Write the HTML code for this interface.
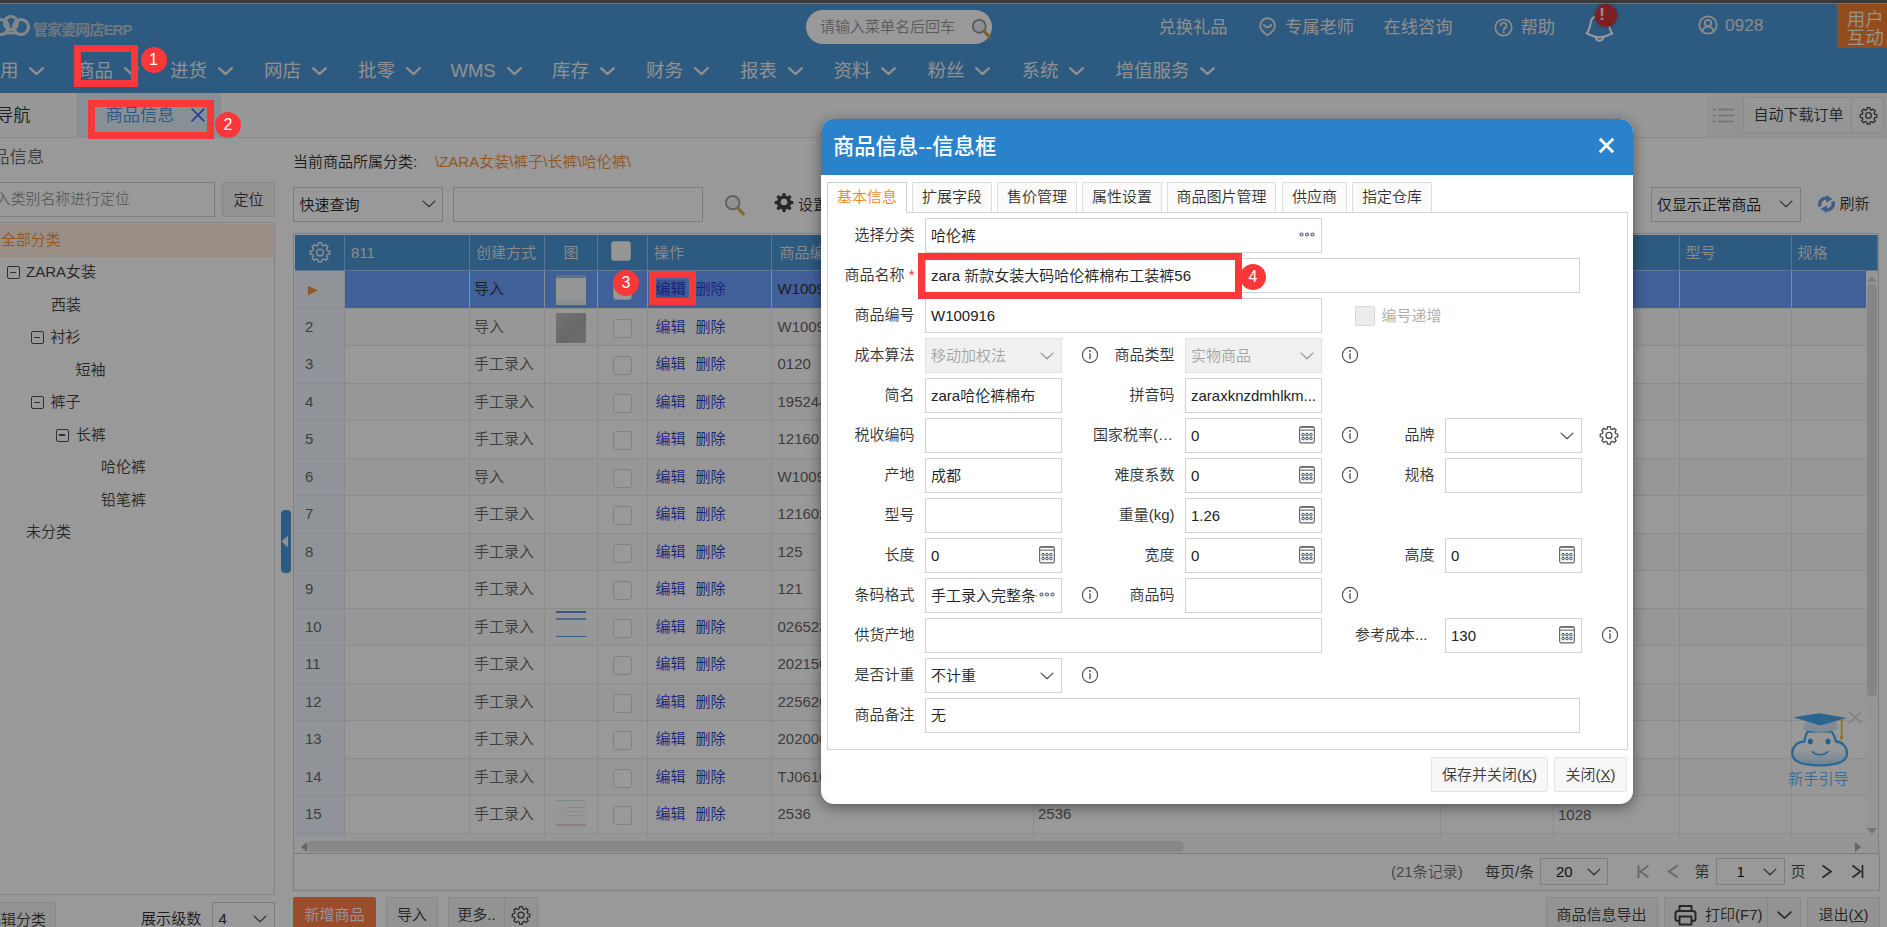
<!DOCTYPE html><html lang="zh-CN"><head><meta charset="utf-8"><title>商品信息</title><style>*{box-sizing:border-box;margin:0;padding:0}
html,body{width:1887px;height:927px;overflow:hidden;background:#fff}
body{font-family:"Liberation Sans","Noto Sans CJK SC",sans-serif;font-size:15px;color:#333;position:relative;font-weight:350}
.a{position:absolute;white-space:nowrap}
#base{position:absolute;left:0;top:0;width:1887px;height:927px;overflow:hidden;background:#fff}
#dim{position:absolute;left:0;top:0;width:1887px;height:927px;background:rgba(0,0,0,.4)}
#topbar{left:0;top:0;width:1887px;height:3px;background:#616161}
#hdr{left:0;top:3px;width:1887px;height:90px;background:#4c96d6}
.hw{color:#e3e3e3}
.menu{top:56px;height:30px;line-height:30px;font-size:18.500px;color:#f0f0f0;font-weight:400}
.chev{position:absolute}
#tabbar{left:0;top:93px;width:1887px;height:45px;background:#fdfdfd;border-bottom:1px solid #e9e9e9}
.inp{position:absolute;border:1px solid #d0d0d0;background:#fff;height:35px}
.btn{position:absolute;border:1px solid #e3e3e3;background:#f6f6f6;height:35px;line-height:33px;text-align:center;border-radius:2px;color:#3c3c3c;font-size:15px;white-space:nowrap}
.tree{font-size:15px;color:#444;line-height:20px}
.tbox{position:absolute;width:13px;height:13px;border:1.200px solid #505050;border-radius:2px;margin-left:-1px}
.tbox:after{content:"";position:absolute;left:2.300px;top:4.600px;width:6px;height:1.400px;background:#505050}
/* grid */
#grid{left:293px;top:233px;width:1586px;height:621px;border:1px solid #d4d4d4;border-bottom:none;background:#fff;overflow:hidden}
.gh{position:absolute;top:1px;height:36px;border-bottom:1px solid #a8c8e8;background:#4c96d6;color:#e8e8e8;font-size:15px;line-height:36px;padding-left:6px;border-right:1px solid #9cc4ea}
.gr{position:absolute;left:1px;width:1571px;height:37.53px;border-bottom:1px solid #e9e9e9}
.gc{position:absolute;top:0;height:100%;border-right:1px solid #ebebeb;line-height:36px;font-size:15px;color:#686868;padding-left:4px;overflow:hidden;white-space:nowrap}
.gn{background:#f0f7fd;border-right:1px solid #e3e6e9;padding-left:10px}
.lk{color:#2b3bd0}
.cb{position:absolute;width:19px;height:19px;border:1px solid #d9d9d9;border-radius:3px;background:#fff}
/* dialog */
#dlg{left:821px;top:119px;width:812px;height:685px;background:#fff;border-radius:13px;overflow:hidden;box-shadow:0 3px 14px rgba(0,0,0,.45)}
#dlgt{left:0;top:0;width:812px;height:56px;background:#2a82cb;color:#fff;font-size:20px;line-height:55px;padding-left:12px}
.dtab{position:absolute;top:63px;height:30px;border:1px solid #ddd;border-bottom:none;background:#fbfbfb;font-size:15px;line-height:28px;text-align:center;color:#333}
.dtab.on{color:#f08519;background:#fff;border-color:#ccc;height:31px}
#dpan{left:6px;top:93px;width:801px;height:538px;border:1px solid #d4d4d4}
.fl{position:absolute;font-size:15px;color:#333;height:34px;line-height:34px;text-align:right;white-space:nowrap}
.fi{position:absolute;height:35px;border:1px solid #d2d2d2;background:#fff;font-size:15px;line-height:33px;padding-left:5px;color:#222;white-space:nowrap;overflow:hidden}
.fi.dis{background:#f0f0f0;color:#a5a5a5;border-color:#e2e2e2}
.ic{position:absolute}
.rb{position:absolute;border:7px solid #fa3839}
.rc{position:absolute;width:26px;height:26px;border-radius:13px;background:#fa3839;color:#fff;font-size:16px;line-height:26px;text-align:center}
</style></head><body>
<div id="base">
<div class="a" id="hdr"></div><div class="a" id="topbar"></div><div class="a" style="left:0;top:3px;width:1887px;height:1px;background:#b4bcc4"></div>
<svg class="ic" style="left:-8px;top:13px" width="40" height="26" viewBox="0 0 40 26"><g fill="none" stroke="#d9e2ea" stroke-width="3.2"><circle cx="9" cy="14" r="7.5"/><circle cx="19" cy="10" r="6.5"/><circle cx="29" cy="14" r="7.5"/></g><path d="M12 20 L26 20" stroke="#d9e2ea" stroke-width="3"/></svg>
<div class="a" style="left:33px;top:19.500px;font-size:15px;line-height:20px;font-weight:700;color:#b9c7d4;letter-spacing:-.9px">管家婆网店ERP</div>
<div class="a" style="left:806px;top:10px;width:186px;height:34px;border-radius:17px;background:#fff"></div>
<div class="a" style="left:820px;top:16px;font-size:15px;line-height:22px;color:#999">请输入菜单名后回车</div>
<svg class="ic" style="left:969.500px;top:16.500px" width="23" height="23" viewBox="0 0 26 26"><circle cx="10.5" cy="10.5" r="7.3" fill="#e9eef2" stroke="#8e9499" stroke-width="2"/><path d="M16 16 L22 22.5" stroke="#c8a45a" stroke-width="3.6" stroke-linecap="round"/><path d="M6.5 9 A4.5 4.5 0 0 1 11 5.6" stroke="#fff" stroke-width="1.6" fill="none"/></svg>
<div class="a" style="left:1158.5px;font-size:17.3px;line-height:24px;top:15px;color:#ececec;font-weight:400">兑换礼品</div>
<svg class="ic" style="left:1258px;top:17px" width="19" height="20" viewBox="0 0 19 20"><path d="M9.5 1.3 a7.4 7.4 0 0 1 7.4 7.4 c0 4.2-4 7.4-7.4 9.6 c-3.4-2.2-7.4-5.4-7.4-9.6 a7.4 7.4 0 0 1 7.4-7.4z" fill="none" stroke="#e6e6e6" stroke-width="1.9"/><path d="M5.8 7.8 c1 3 6.4 3 7.4 0" fill="none" stroke="#e6e6e6" stroke-width="1.9" stroke-linecap="round"/></svg>
<div class="a" style="left:1285px;font-size:17.3px;line-height:24px;top:15px;color:#ececec;font-weight:400">专属老师</div>
<div class="a" style="left:1383.5px;font-size:17.3px;line-height:24px;top:15px;color:#ececec;font-weight:400">在线咨询</div>
<svg class="ic" style="left:1494px;top:17.5px" width="19" height="19" viewBox="0 0 19 19"><circle cx="9.5" cy="9.5" r="8.2" fill="none" stroke="#e6e6e6" stroke-width="1.8"/><path d="M6.8 7.6 a2.8 2.8 0 1 1 4.2 2.3 c-1 .6-1.4 1-1.4 2.2" fill="none" stroke="#e6e6e6" stroke-width="1.8" stroke-linecap="round"/><circle cx="9.6" cy="14.4" r="1.1" fill="#e6e6e6"/></svg>
<div class="a" style="left:1520.5px;font-size:17.3px;line-height:24px;top:15px;color:#ececec;font-weight:400">帮助</div>
<svg class="ic" style="left:1585px;top:15px" width="29" height="28" viewBox="0 0 29 28"><path d="M1.700 18.400 C4.500 15 5.300 10 6 6.500 C6.700 3 9.500 1 14.500 1 C19.500 1 22.300 3 23 6.500 C23.700 10 24.500 15 27.300 18.400 C22 21 17 22.200 14.500 22.200 C12 22.200 7 21 1.700 18.400 Z" fill="none" stroke="#ffffff" stroke-width="2.100" stroke-linejoin="round"/><path d="M10.300 21.600 C11 24.500 12.500 25.800 14.500 25.800 C16.500 25.800 18 24.500 18.700 21.600" fill="none" stroke="#ffffff" stroke-width="2.100"/></svg>
<div class="a" style="left:1594.500px;top:4px;width:22.500px;height:23px;border-radius:12px;background:#d2363a;box-shadow:0 0 3px rgba(120,40,60,.5)"></div>
<div class="a" style="left:1598px;top:3.500px;width:8px;font-size:16.500px;line-height:21px;text-align:center;font-weight:700;color:#f4f4f4">!</div>
<svg class="ic" style="left:1698px;top:15px" width="20" height="20" viewBox="0 0 20 20"><circle cx="10" cy="10" r="8.700" fill="none" stroke="#e6e6e6" stroke-width="1.800"/><circle cx="10" cy="8" r="3.200" fill="none" stroke="#e6e6e6" stroke-width="1.800"/><path d="M4.300 16.300 c1-3.300 3.200-4.600 5.700-4.600 s4.700 1.300 5.700 4.600" fill="none" stroke="#e6e6e6" stroke-width="1.800"/></svg>
<div class="a" style="left:1725px;top:13px;font-size:17.3px;line-height:24px;color:#e6e6e6">0928</div>
<div class="a" style="left:1837px;top:4px;width:50px;height:43.500px;background:#f6802f"></div>
<div class="a" style="left:1846.700px;top:11.300px;font-size:18.500px;line-height:17.600px;color:#fff5ea;white-space:normal;width:40px">用户互动</div>
<div class="a menu" style="left:-18.5px">常用</div>
<svg class="chev" style="left:29.0px;top:66.5px" width="15" height="8.5" viewBox="0 0 16 9"><path d="M1.2 1.2 L8 7.6 L14.8 1.2" fill="none" stroke="#eeeeee" stroke-width="2.4" stroke-linecap="round" stroke-linejoin="round"/></svg>
<div class="a menu" style="left:76px">商品</div>
<svg class="chev" style="left:123.5px;top:66.5px" width="15" height="8.5" viewBox="0 0 16 9"><path d="M1.2 1.2 L8 7.6 L14.8 1.2" fill="none" stroke="#eeeeee" stroke-width="2.4" stroke-linecap="round" stroke-linejoin="round"/></svg>
<div class="a menu" style="left:170px">进货</div>
<svg class="chev" style="left:217.5px;top:66.5px" width="15" height="8.5" viewBox="0 0 16 9"><path d="M1.2 1.2 L8 7.6 L14.8 1.2" fill="none" stroke="#eeeeee" stroke-width="2.4" stroke-linecap="round" stroke-linejoin="round"/></svg>
<div class="a menu" style="left:264px">网店</div>
<svg class="chev" style="left:311.5px;top:66.5px" width="15" height="8.5" viewBox="0 0 16 9"><path d="M1.2 1.2 L8 7.6 L14.8 1.2" fill="none" stroke="#eeeeee" stroke-width="2.4" stroke-linecap="round" stroke-linejoin="round"/></svg>
<div class="a menu" style="left:358px">批零</div>
<svg class="chev" style="left:405.5px;top:66.5px" width="15" height="8.5" viewBox="0 0 16 9"><path d="M1.2 1.2 L8 7.6 L14.8 1.2" fill="none" stroke="#eeeeee" stroke-width="2.4" stroke-linecap="round" stroke-linejoin="round"/></svg>
<div class="a menu" style="left:450.5px">WMS</div>
<svg class="chev" style="left:507.0px;top:66.5px" width="15" height="8.5" viewBox="0 0 16 9"><path d="M1.2 1.2 L8 7.6 L14.8 1.2" fill="none" stroke="#eeeeee" stroke-width="2.4" stroke-linecap="round" stroke-linejoin="round"/></svg>
<div class="a menu" style="left:552px">库存</div>
<svg class="chev" style="left:599.5px;top:66.5px" width="15" height="8.5" viewBox="0 0 16 9"><path d="M1.2 1.2 L8 7.6 L14.8 1.2" fill="none" stroke="#eeeeee" stroke-width="2.4" stroke-linecap="round" stroke-linejoin="round"/></svg>
<div class="a menu" style="left:646px">财务</div>
<svg class="chev" style="left:693.5px;top:66.5px" width="15" height="8.5" viewBox="0 0 16 9"><path d="M1.2 1.2 L8 7.6 L14.8 1.2" fill="none" stroke="#eeeeee" stroke-width="2.4" stroke-linecap="round" stroke-linejoin="round"/></svg>
<div class="a menu" style="left:740px">报表</div>
<svg class="chev" style="left:787.5px;top:66.5px" width="15" height="8.5" viewBox="0 0 16 9"><path d="M1.2 1.2 L8 7.6 L14.8 1.2" fill="none" stroke="#eeeeee" stroke-width="2.4" stroke-linecap="round" stroke-linejoin="round"/></svg>
<div class="a menu" style="left:833.5px">资料</div>
<svg class="chev" style="left:881.0px;top:66.5px" width="15" height="8.5" viewBox="0 0 16 9"><path d="M1.2 1.2 L8 7.6 L14.8 1.2" fill="none" stroke="#eeeeee" stroke-width="2.4" stroke-linecap="round" stroke-linejoin="round"/></svg>
<div class="a menu" style="left:927.5px">粉丝</div>
<svg class="chev" style="left:975.0px;top:66.5px" width="15" height="8.5" viewBox="0 0 16 9"><path d="M1.2 1.2 L8 7.6 L14.8 1.2" fill="none" stroke="#eeeeee" stroke-width="2.4" stroke-linecap="round" stroke-linejoin="round"/></svg>
<div class="a menu" style="left:1021.5px">系统</div>
<svg class="chev" style="left:1069.0px;top:66.5px" width="15" height="8.5" viewBox="0 0 16 9"><path d="M1.2 1.2 L8 7.6 L14.8 1.2" fill="none" stroke="#eeeeee" stroke-width="2.4" stroke-linecap="round" stroke-linejoin="round"/></svg>
<div class="a menu" style="left:1115.5px">增值服务</div>
<svg class="chev" style="left:1200.0px;top:66.5px" width="15" height="8.5" viewBox="0 0 16 9"><path d="M1.2 1.2 L8 7.6 L14.8 1.2" fill="none" stroke="#eeeeee" stroke-width="2.4" stroke-linecap="round" stroke-linejoin="round"/></svg>
<div class="a" id="tabbar"></div>
<div class="a" style="left:77px;top:93px;width:144px;height:44px;background:#e2f0fc;border-left:1px solid #dfe6ec;border-right:1px solid #dfe6ec"></div>
<div class="a" style="left:-4px;top:103px;font-size:17.3px;line-height:24px;color:#333">导航</div>
<div class="a" style="left:105.500px;top:103px;font-size:17.3px;line-height:24px;color:#4c8fd6">商品信息</div>
<svg class="ic" style="left:191px;top:108px" width="14" height="14" viewBox="0 0 14 14"><path d="M1.200 1.200 L12.800 12.800 M12.800 1.200 L1.200 12.800" stroke="#4f6df0" stroke-width="1.900" stroke-linecap="round"/></svg>
<div class="a" style="left:1706px;top:93px;width:181px;height:44px;background:#f6f6f6"></div>
<svg class="ic" style="left:1713px;top:108px" width="21" height="15" viewBox="0 0 21 15"><g stroke="#bdbdbd" stroke-width="1.500"><path d="M0 1.500h2.500M5 1.500h16M0 7.500h2.500M5 7.500h16M0 13.500h2.500M5 13.500h16"/></g></svg>
<div class="btn" style="left:1743px;top:97px;width:109px;height:36px;line-height:34px;border-radius:3px 0 0 3px;background:#fafafa;padding-left:2px">自动下载订单</div>
<div class="btn" style="left:1851px;top:97px;width:33px;height:36px;border-radius:0 3px 3px 0;background:#fafafa"></div>
<svg class="ic" style="left:1858.5px;top:106px" width="19" height="19" viewBox="0 0 24 24"><path fill="none" stroke="#444" stroke-width="1.6" stroke-linejoin="round" d="M10.3 2.5h3.4l.5 2.6 1.7.8 2.3-1.5 2.4 2.4-1.5 2.3.8 1.7 2.6.5v3.4l-2.6.5-.8 1.7 1.5 2.3-2.4 2.4-2.3-1.5-1.7.8-.5 2.6h-3.4l-.5-2.6-1.7-.8-2.3 1.5-2.4-2.4 1.5-2.3-.8-1.7-2.6-.5v-3.4l2.6-.5.8-1.7-1.5-2.3 2.4-2.4 2.3 1.5 1.7-.8z" transform="translate(0,-.5)"/><circle cx="12" cy="12" r="3.6" fill="none" stroke="#444" stroke-width="1.6"/></svg>
<div class="a" style="left:-25px;top:145px;font-size:17.3px;line-height:24px;color:#6a6a6a">商品信息</div>
<div class="inp" style="left:-10px;top:182px;width:225px"></div>
<div class="a" style="left:-34px;top:188px;font-size:14.900px;line-height:22px;color:#a0a0a0">请输入类别名称进行定位</div>
<div class="btn" style="left:222px;top:182px;width:53px">定位</div>
<div class="a" style="left:-2px;top:222px;width:277px;height:673px;border:1px solid #dcdcdc;background:#fff"></div>
<div class="a" style="left:0;top:224px;width:273px;height:33px;background:#ffefdf"></div>
<div class="a tree" style="left:1px;top:230px;color:#f5913a;font-size:14.900px">全部分类</div>
<div class="tbox" style="left:7.5px;top:266.1px"></div>
<div class="a tree" style="left:26px;top:262.1px">ZARA女装</div>
<div class="a tree" style="left:51px;top:294.6px">西装</div>
<div class="tbox" style="left:32px;top:331.1px"></div>
<div class="a tree" style="left:50.5px;top:327.1px">衬衫</div>
<div class="a tree" style="left:75.5px;top:359.6px">短袖</div>
<div class="tbox" style="left:32px;top:396.1px"></div>
<div class="a tree" style="left:50.5px;top:392.1px">裤子</div>
<div class="tbox" style="left:57px;top:428.6px"></div>
<div class="a tree" style="left:76px;top:424.6px">长裤</div>
<div class="a tree" style="left:101px;top:457.1px">哈伦裤</div>
<div class="a tree" style="left:101px;top:489.6px">铅笔裤</div>
<div class="a tree" style="left:26px;top:522.1px">未分类</div>
<div class="btn" style="left:-30px;top:902px;width:86px;text-align:left;padding-left:15px">编辑分类</div>
<div class="a" style="left:141px;top:908px;font-size:15.100px;line-height:22px;color:#333">展示级数</div>
<div class="inp" style="left:212px;top:902px;width:63px"></div>
<div class="a" style="left:218.500px;top:908px;line-height:22px;font-size:15px">4</div>
<svg class="chev" style="left:253px;top:914.5px" width="14" height="8" viewBox="0 0 16 9"><path d="M1.2 1.2 L8 7.6 L14.8 1.2" fill="none" stroke="#555" stroke-width="1.4" stroke-linecap="round" stroke-linejoin="round"/></svg>
<div class="a" style="left:281px;top:510px;width:10px;height:63px;border-radius:4px;background:#4c96d6"></div>
<svg class="ic" style="left:281px;top:535px" width="8" height="13" viewBox="0 0 8 13"><path d="M7 0.500 L0.500 6.500 L7 12.500z" fill="#eee"/></svg>
<div class="a" style="left:293px;top:151px;font-size:15px;line-height:22px;color:#333">当前商品所属分类:</div>
<div class="a" style="left:435px;top:151px;font-size:15px;line-height:22px;color:#f5913a">\ZARA女装\裤子\长裤\哈伦裤\</div>
<div class="inp" style="left:293px;top:187px;width:150px"></div>
<div class="a" style="left:299.500px;top:193.500px;font-size:15px;line-height:22px;color:#222">快速查询</div>
<svg class="chev" style="left:422px;top:200px" width="14" height="8" viewBox="0 0 16 9"><path d="M1.2 1.2 L8 7.6 L14.8 1.2" fill="none" stroke="#555" stroke-width="1.4" stroke-linecap="round" stroke-linejoin="round"/></svg>
<div class="inp" style="left:453px;top:187px;width:250px"></div>
<svg class="ic" style="left:723px;top:193px" width="24" height="24" viewBox="0 0 26 26"><circle cx="10.500" cy="10.500" r="7.300" fill="#eef2f6" stroke="#9aa0a6" stroke-width="2"/><path d="M16 16 L22 22.500" stroke="#d0ad62" stroke-width="3.600" stroke-linecap="round"/><path d="M6.500 9 A4.500 4.500 0 0 1 11 5.600" stroke="#fff" stroke-width="1.600" fill="none"/></svg>
<svg class="ic" style="left:774px;top:192px" width="20" height="20" viewBox="0 0 24 24"><path fill="#444" fill-rule="evenodd" d="M10.300 1.500h3.400l.6 3 1.900.8 2.500-1.700 2.400 2.400-1.700 2.500.8 1.900 3 .6v3.400l-3 .6-.8 1.900 1.700 2.500-2.400 2.400-2.500-1.700-1.900.8-.6 3h-3.400l-.6-3-1.900-.8-2.500 1.700-2.400-2.400 1.700-2.500-.8-1.900-3-.6v-3.400l3-.6.8-1.900-1.700-2.500 2.400-2.400 2.500 1.700 1.900-.8z M12 8 a4 4 0 1 0 0 8 a4 4 0 1 0 0-8z"/></svg>
<div class="a" style="left:798px;top:193.500px;font-size:15px;line-height:22px;color:#333">设置</div>
<div class="inp" style="left:1651px;top:187px;width:150px"></div>
<div class="a" style="left:1657px;top:193.500px;font-size:14.900px;line-height:22px;color:#222">仅显示正常商品</div>
<svg class="chev" style="left:1779px;top:200px" width="14" height="8" viewBox="0 0 16 9"><path d="M1.2 1.2 L8 7.6 L14.8 1.2" fill="none" stroke="#555" stroke-width="1.4" stroke-linecap="round" stroke-linejoin="round"/></svg>
<svg class="ic" style="left:1816.500px;top:195px" width="19" height="18" viewBox="0 0 19 18"><g fill="none" stroke="#6a9be0" stroke-width="3.400"><path d="M3.200 11.500 a6 6 0 0 1 8.800-7.300"/><path d="M15.800 6.500 a6 6 0 0 1-8.800 7.300"/></g><path d="M9.500 0 l6 4.200 -6.500 3.300z M9.500 18 l-6-4.200 6.500-3.300z" fill="#6a9be0"/></svg>
<div class="a" style="left:1839.500px;top:192.500px;font-size:15px;line-height:22px;color:#333">刷新</div>
<div class="btn" style="left:293px;top:897px;width:83px;background:#ff8048;border-color:#ff8048;color:#fff">新增商品</div>
<div class="btn" style="left:386px;top:897px;width:52px">导入</div>
<div class="btn" style="left:448px;top:897px;width:57px;border-radius:2px 0 0 2px">更多..</div>
<div class="btn" style="left:504px;top:897px;width:34px;border-radius:0 2px 2px 0"></div>
<svg class="ic" style="left:511px;top:904.5px" width="20" height="20" viewBox="0 0 24 24"><path fill="none" stroke="#444" stroke-width="1.5" stroke-linejoin="round" d="M10.3 2.5h3.4l.5 2.6 1.7.8 2.3-1.5 2.4 2.4-1.5 2.3.8 1.7 2.6.5v3.4l-2.6.5-.8 1.7 1.5 2.3-2.4 2.4-2.3-1.5-1.7.8-.5 2.6h-3.4l-.5-2.6-1.7-.8-2.3 1.5-2.4-2.4 1.5-2.3-.8-1.7-2.6-.5v-3.4l2.6-.5.8-1.7-1.5-2.3 2.4-2.4 2.3 1.5 1.7-.8z" transform="translate(0,-.5)"/><circle cx="12" cy="12" r="3.6" fill="none" stroke="#444" stroke-width="1.5"/></svg>
<div class="btn" style="left:1545.500px;top:897px;width:112px">商品信息导出</div>
<div class="btn" style="left:1664px;top:897px;width:104px;border-radius:2px 0 0 2px;text-align:left;padding-left:40px">打印(F7)</div>
<svg class="ic" style="left:1674px;top:904px" width="23" height="22" viewBox="0 0 23 22"><g fill="none" stroke="#444" stroke-width="2" stroke-linejoin="round"><path d="M5.500 7V2h12v5"/><rect x="1.500" y="7" width="20" height="10" rx="2.500"/><rect x="5.500" y="12.500" width="12" height="8" fill="#f6f6f6"/></g></svg>
<div class="btn" style="left:1767px;top:897px;width:34px;border-radius:0 2px 2px 0"></div>
<svg class="chev" style="left:1776.5px;top:911px" width="15" height="8.5" viewBox="0 0 16 9"><path d="M1.2 1.2 L8 7.6 L14.8 1.2" fill="none" stroke="#444" stroke-width="1.7" stroke-linecap="round" stroke-linejoin="round"/></svg>
<div class="btn" style="left:1807px;top:897px;width:73px">退出(<u>X</u>)</div>
<div class="a" id="grid">
<div class="gh" style="left:1px;width:50px;padding-left:0;"></div>
<div class="gh" style="left:51px;width:125px;">811</div>
<div class="gh" style="left:176px;width:75px;">创建方式</div>
<div class="gh" style="left:251px;width:53px;text-align:center;padding-left:0;">图</div>
<div class="gh" style="left:304px;width:50px;"></div>
<div class="gh" style="left:354px;width:124px;">操作</div>
<div class="gh" style="left:478px;width:262px;padding-left:7.500px;">商品编号</div>
<div class="gh" style="left:740px;width:407px;">商品名称</div>
<div class="gh" style="left:1147px;width:113px;">简名</div>
<div class="gh" style="left:1260px;width:125.5px;">拼音码</div>
<div class="gh" style="left:1385.5px;width:112.0px;">型号</div>
<div class="gh" style="left:1497.5px;width:86.5px;">规格</div>
<svg class="ic" style="left:14.500px;top:7px" width="22" height="22" viewBox="0 0 24 24"><path fill="none" stroke="#e8e8e8" stroke-width="1.700" stroke-linejoin="round" d="M10.300 2h3.400l.5 2.600 1.700.8 2.300-1.500 2.400 2.400-1.500 2.300.8 1.700 2.600.5v3.400l-2.600.5-.8 1.700 1.500 2.300-2.400 2.400-2.300-1.500-1.700.8-.5 2.600h-3.400l-.5-2.600-1.700-.8-2.300 1.500-2.400-2.400 1.500-2.300-.8-1.700-2.600-.5v-3.400l2.600-.5.8-1.700-1.500-2.300 2.400-2.400 2.300 1.500 1.700-.8z"/><circle cx="12" cy="12.500" r="3.600" fill="none" stroke="#e8e8e8" stroke-width="1.700"/></svg>
<div class="cb" style="left:317px;top:7px;border-color:#ddd;background:#fafafa;width:20px;height:20px"></div>
<div class="gr" style="top:37.0px;background:#6d9fff">
<div class="gc gn" style="left:0;width:50px"><svg width="12" height="11" viewBox="0 0 14 12" style="position:absolute;left:11.500px;top:14px"><path d="M1 0.500 L13 6 L1 11.500z" fill="#f5913a"/></svg></div>
<div class="gc" style="left:50px;width:125px;"></div>
<div class="gc" style="left:175px;width:75px;color:#333;">导入</div>
<div class="gc" style="left:250px;width:53px;"><div style="position:absolute;left:11px;top:4px;width:30px;height:30px;background:#fafbfc;border-top:3px solid #9cc4e8;box-shadow:inset 0 -6px 0 #eef1f4"></div></div>
<div class="gc" style="left:303px;width:50px;"><div class="cb" style="left:15px;top:10px"></div></div>
<div class="gc" style="left:353px;width:124px;"><span style="margin-left:3.500px"></span><span class="lk" style="background:#5f8cf0;color:#2a30d8">编辑</span><span class="lk" style="margin-left:10px">删除</span></div>
<div class="gc" style="left:477px;width:262px;color:#333;padding-left:5.500px;">W100916</div>
<div class="gc" style="left:739px;width:407px;color:#333;">zara 新款女装大码哈伦裤棉布工装裤56</div>
<div class="gc" style="left:1146px;width:113px;"></div>
<div class="gc" style="left:1259px;width:125.5px;padding-top:1px;"></div>
<div class="gc" style="left:1384.5px;width:112.0px;"></div>
<div class="gc" style="left:1496.5px;width:86.5px;"></div>
</div>
<div class="gr" style="top:74.53px;background:#fcfcfc">
<div class="gc gn" style="left:0;width:50px">2</div>
<div class="gc" style="left:50px;width:125px;"></div>
<div class="gc" style="left:175px;width:75px;">导入</div>
<div class="gc" style="left:250px;width:53px;"><div style="position:absolute;left:11px;top:4px;width:30px;height:30px;background:linear-gradient(135deg,#c4c4c4,#aeaeae 55%,#bababa)"></div></div>
<div class="gc" style="left:303px;width:50px;"><div class="cb" style="left:15px;top:10px"></div></div>
<div class="gc" style="left:353px;width:124px;"><span style="margin-left:3.500px"></span><span class="lk">编辑</span><span class="lk" style="margin-left:10px">删除</span></div>
<div class="gc" style="left:477px;width:262px;padding-left:5.500px;">W100915</div>
<div class="gc" style="left:739px;width:407px;">zara 新款女装修身显瘦哈伦裤</div>
<div class="gc" style="left:1146px;width:113px;"></div>
<div class="gc" style="left:1259px;width:125.5px;padding-top:1px;"></div>
<div class="gc" style="left:1384.5px;width:112.0px;"></div>
<div class="gc" style="left:1496.5px;width:86.5px;"></div>
</div>
<div class="gr" style="top:112.06px;background:#fff">
<div class="gc gn" style="left:0;width:50px">3</div>
<div class="gc" style="left:50px;width:125px;"></div>
<div class="gc" style="left:175px;width:75px;">手工录入</div>
<div class="gc" style="left:250px;width:53px;"></div>
<div class="gc" style="left:303px;width:50px;"><div class="cb" style="left:15px;top:10px"></div></div>
<div class="gc" style="left:353px;width:124px;"><span style="margin-left:3.500px"></span><span class="lk">编辑</span><span class="lk" style="margin-left:10px">删除</span></div>
<div class="gc" style="left:477px;width:262px;padding-left:5.500px;">0120</div>
<div class="gc" style="left:739px;width:407px;">0120</div>
<div class="gc" style="left:1146px;width:113px;"></div>
<div class="gc" style="left:1259px;width:125.5px;padding-top:1px;"></div>
<div class="gc" style="left:1384.5px;width:112.0px;"></div>
<div class="gc" style="left:1496.5px;width:86.5px;"></div>
</div>
<div class="gr" style="top:149.59px;background:#fcfcfc">
<div class="gc gn" style="left:0;width:50px">4</div>
<div class="gc" style="left:50px;width:125px;"></div>
<div class="gc" style="left:175px;width:75px;">手工录入</div>
<div class="gc" style="left:250px;width:53px;"></div>
<div class="gc" style="left:303px;width:50px;"><div class="cb" style="left:15px;top:10px"></div></div>
<div class="gc" style="left:353px;width:124px;"><span style="margin-left:3.500px"></span><span class="lk">编辑</span><span class="lk" style="margin-left:10px">删除</span></div>
<div class="gc" style="left:477px;width:262px;padding-left:5.500px;">19524401</div>
<div class="gc" style="left:739px;width:407px;">短袖衬衫</div>
<div class="gc" style="left:1146px;width:113px;"></div>
<div class="gc" style="left:1259px;width:125.5px;padding-top:1px;"></div>
<div class="gc" style="left:1384.5px;width:112.0px;"></div>
<div class="gc" style="left:1496.5px;width:86.5px;"></div>
</div>
<div class="gr" style="top:187.12px;background:#fff">
<div class="gc gn" style="left:0;width:50px">5</div>
<div class="gc" style="left:50px;width:125px;"></div>
<div class="gc" style="left:175px;width:75px;">手工录入</div>
<div class="gc" style="left:250px;width:53px;"></div>
<div class="gc" style="left:303px;width:50px;"><div class="cb" style="left:15px;top:10px"></div></div>
<div class="gc" style="left:353px;width:124px;"><span style="margin-left:3.500px"></span><span class="lk">编辑</span><span class="lk" style="margin-left:10px">删除</span></div>
<div class="gc" style="left:477px;width:262px;padding-left:5.500px;">121601</div>
<div class="gc" style="left:739px;width:407px;">长袖衬衫</div>
<div class="gc" style="left:1146px;width:113px;"></div>
<div class="gc" style="left:1259px;width:125.5px;padding-top:1px;"></div>
<div class="gc" style="left:1384.5px;width:112.0px;"></div>
<div class="gc" style="left:1496.5px;width:86.5px;"></div>
</div>
<div class="gr" style="top:224.65px;background:#fcfcfc">
<div class="gc gn" style="left:0;width:50px">6</div>
<div class="gc" style="left:50px;width:125px;"></div>
<div class="gc" style="left:175px;width:75px;">导入</div>
<div class="gc" style="left:250px;width:53px;"></div>
<div class="gc" style="left:303px;width:50px;"><div class="cb" style="left:15px;top:10px"></div></div>
<div class="gc" style="left:353px;width:124px;"><span style="margin-left:3.500px"></span><span class="lk">编辑</span><span class="lk" style="margin-left:10px">删除</span></div>
<div class="gc" style="left:477px;width:262px;padding-left:5.500px;">W100914</div>
<div class="gc" style="left:739px;width:407px;">zara 新款女装高腰哈伦裤</div>
<div class="gc" style="left:1146px;width:113px;"></div>
<div class="gc" style="left:1259px;width:125.5px;padding-top:1px;"></div>
<div class="gc" style="left:1384.5px;width:112.0px;"></div>
<div class="gc" style="left:1496.5px;width:86.5px;"></div>
</div>
<div class="gr" style="top:262.18px;background:#fff">
<div class="gc gn" style="left:0;width:50px">7</div>
<div class="gc" style="left:50px;width:125px;"></div>
<div class="gc" style="left:175px;width:75px;">手工录入</div>
<div class="gc" style="left:250px;width:53px;"></div>
<div class="gc" style="left:303px;width:50px;"><div class="cb" style="left:15px;top:10px"></div></div>
<div class="gc" style="left:353px;width:124px;"><span style="margin-left:3.500px"></span><span class="lk">编辑</span><span class="lk" style="margin-left:10px">删除</span></div>
<div class="gc" style="left:477px;width:262px;padding-left:5.500px;">121602</div>
<div class="gc" style="left:739px;width:407px;">休闲西装</div>
<div class="gc" style="left:1146px;width:113px;"></div>
<div class="gc" style="left:1259px;width:125.5px;padding-top:1px;"></div>
<div class="gc" style="left:1384.5px;width:112.0px;"></div>
<div class="gc" style="left:1496.5px;width:86.5px;"></div>
</div>
<div class="gr" style="top:299.71px;background:#fcfcfc">
<div class="gc gn" style="left:0;width:50px">8</div>
<div class="gc" style="left:50px;width:125px;"></div>
<div class="gc" style="left:175px;width:75px;">手工录入</div>
<div class="gc" style="left:250px;width:53px;"></div>
<div class="gc" style="left:303px;width:50px;"><div class="cb" style="left:15px;top:10px"></div></div>
<div class="gc" style="left:353px;width:124px;"><span style="margin-left:3.500px"></span><span class="lk">编辑</span><span class="lk" style="margin-left:10px">删除</span></div>
<div class="gc" style="left:477px;width:262px;padding-left:5.500px;">125</div>
<div class="gc" style="left:739px;width:407px;">125</div>
<div class="gc" style="left:1146px;width:113px;"></div>
<div class="gc" style="left:1259px;width:125.5px;padding-top:1px;"></div>
<div class="gc" style="left:1384.5px;width:112.0px;"></div>
<div class="gc" style="left:1496.5px;width:86.5px;"></div>
</div>
<div class="gr" style="top:337.24px;background:#fff">
<div class="gc gn" style="left:0;width:50px">9</div>
<div class="gc" style="left:50px;width:125px;"></div>
<div class="gc" style="left:175px;width:75px;">手工录入</div>
<div class="gc" style="left:250px;width:53px;"></div>
<div class="gc" style="left:303px;width:50px;"><div class="cb" style="left:15px;top:10px"></div></div>
<div class="gc" style="left:353px;width:124px;"><span style="margin-left:3.500px"></span><span class="lk">编辑</span><span class="lk" style="margin-left:10px">删除</span></div>
<div class="gc" style="left:477px;width:262px;padding-left:5.500px;">121</div>
<div class="gc" style="left:739px;width:407px;">121</div>
<div class="gc" style="left:1146px;width:113px;"></div>
<div class="gc" style="left:1259px;width:125.5px;padding-top:1px;"></div>
<div class="gc" style="left:1384.5px;width:112.0px;"></div>
<div class="gc" style="left:1496.5px;width:86.5px;"></div>
</div>
<div class="gr" style="top:374.77px;background:#fcfcfc">
<div class="gc gn" style="left:0;width:50px">10</div>
<div class="gc" style="left:50px;width:125px;"></div>
<div class="gc" style="left:175px;width:75px;">手工录入</div>
<div class="gc" style="left:250px;width:53px;"><div style="position:absolute;left:11px;top:2px;width:30px;height:26px;background:#fbfbfb;border-top:2px solid #5c9ad6;border-bottom:1.500px solid #5c9ad6;box-shadow:inset 0 5px 0 #fbfbfb,inset 0 7px 0 #7fb2e0"></div></div>
<div class="gc" style="left:303px;width:50px;"><div class="cb" style="left:15px;top:10px"></div></div>
<div class="gc" style="left:353px;width:124px;"><span style="margin-left:3.500px"></span><span class="lk">编辑</span><span class="lk" style="margin-left:10px">删除</span></div>
<div class="gc" style="left:477px;width:262px;padding-left:5.500px;">026523</div>
<div class="gc" style="left:739px;width:407px;">铅笔裤</div>
<div class="gc" style="left:1146px;width:113px;"></div>
<div class="gc" style="left:1259px;width:125.5px;padding-top:1px;"></div>
<div class="gc" style="left:1384.5px;width:112.0px;"></div>
<div class="gc" style="left:1496.5px;width:86.5px;"></div>
</div>
<div class="gr" style="top:412.3px;background:#fff">
<div class="gc gn" style="left:0;width:50px">11</div>
<div class="gc" style="left:50px;width:125px;"></div>
<div class="gc" style="left:175px;width:75px;">手工录入</div>
<div class="gc" style="left:250px;width:53px;"></div>
<div class="gc" style="left:303px;width:50px;"><div class="cb" style="left:15px;top:10px"></div></div>
<div class="gc" style="left:353px;width:124px;"><span style="margin-left:3.500px"></span><span class="lk">编辑</span><span class="lk" style="margin-left:10px">删除</span></div>
<div class="gc" style="left:477px;width:262px;padding-left:5.500px;">202150</div>
<div class="gc" style="left:739px;width:407px;">高腰铅笔裤</div>
<div class="gc" style="left:1146px;width:113px;"></div>
<div class="gc" style="left:1259px;width:125.5px;padding-top:1px;"></div>
<div class="gc" style="left:1384.5px;width:112.0px;"></div>
<div class="gc" style="left:1496.5px;width:86.5px;"></div>
</div>
<div class="gr" style="top:449.83px;background:#fcfcfc">
<div class="gc gn" style="left:0;width:50px">12</div>
<div class="gc" style="left:50px;width:125px;"></div>
<div class="gc" style="left:175px;width:75px;">手工录入</div>
<div class="gc" style="left:250px;width:53px;"></div>
<div class="gc" style="left:303px;width:50px;"><div class="cb" style="left:15px;top:10px"></div></div>
<div class="gc" style="left:353px;width:124px;"><span style="margin-left:3.500px"></span><span class="lk">编辑</span><span class="lk" style="margin-left:10px">删除</span></div>
<div class="gc" style="left:477px;width:262px;padding-left:5.500px;">225626</div>
<div class="gc" style="left:739px;width:407px;">弹力铅笔裤</div>
<div class="gc" style="left:1146px;width:113px;"></div>
<div class="gc" style="left:1259px;width:125.5px;padding-top:1px;"></div>
<div class="gc" style="left:1384.5px;width:112.0px;"></div>
<div class="gc" style="left:1496.5px;width:86.5px;"></div>
</div>
<div class="gr" style="top:487.36px;background:#fff">
<div class="gc gn" style="left:0;width:50px">13</div>
<div class="gc" style="left:50px;width:125px;"></div>
<div class="gc" style="left:175px;width:75px;">手工录入</div>
<div class="gc" style="left:250px;width:53px;"></div>
<div class="gc" style="left:303px;width:50px;"><div class="cb" style="left:15px;top:10px"></div></div>
<div class="gc" style="left:353px;width:124px;"><span style="margin-left:3.500px"></span><span class="lk">编辑</span><span class="lk" style="margin-left:10px">删除</span></div>
<div class="gc" style="left:477px;width:262px;padding-left:5.500px;">202000</div>
<div class="gc" style="left:739px;width:407px;">修身铅笔裤</div>
<div class="gc" style="left:1146px;width:113px;"></div>
<div class="gc" style="left:1259px;width:125.5px;padding-top:1px;"></div>
<div class="gc" style="left:1384.5px;width:112.0px;"></div>
<div class="gc" style="left:1496.5px;width:86.5px;"></div>
</div>
<div class="gr" style="top:524.89px;background:#fcfcfc">
<div class="gc gn" style="left:0;width:50px">14</div>
<div class="gc" style="left:50px;width:125px;"></div>
<div class="gc" style="left:175px;width:75px;">手工录入</div>
<div class="gc" style="left:250px;width:53px;"></div>
<div class="gc" style="left:303px;width:50px;"><div class="cb" style="left:15px;top:10px"></div></div>
<div class="gc" style="left:353px;width:124px;"><span style="margin-left:3.500px"></span><span class="lk">编辑</span><span class="lk" style="margin-left:10px">删除</span></div>
<div class="gc" style="left:477px;width:262px;padding-left:5.500px;">TJ0610</div>
<div class="gc" style="left:739px;width:407px;">套装</div>
<div class="gc" style="left:1146px;width:113px;"></div>
<div class="gc" style="left:1259px;width:125.5px;padding-top:1px;"></div>
<div class="gc" style="left:1384.5px;width:112.0px;"></div>
<div class="gc" style="left:1496.5px;width:86.5px;"></div>
</div>
<div class="gr" style="top:562.42px;background:#fff">
<div class="gc gn" style="left:0;width:50px">15</div>
<div class="gc" style="left:50px;width:125px;"></div>
<div class="gc" style="left:175px;width:75px;">手工录入</div>
<div class="gc" style="left:250px;width:53px;"><div style="position:absolute;left:11px;top:4px;width:30px;height:30px;background:#fcfcfc;border-top:1px solid #cfe6dc;box-shadow:inset 0 -4px 0 #fcfcfc,inset 0 -6px 0 #ecd6da"></div><div style="position:absolute;left:21px;top:11px;width:16px;height:1px;background:#dde0ea;box-shadow:0 4px 0 #e6e6ee,0 8px 0 #e8e8f0"></div></div>
<div class="gc" style="left:303px;width:50px;"><div class="cb" style="left:15px;top:10px"></div></div>
<div class="gc" style="left:353px;width:124px;"><span style="margin-left:3.500px"></span><span class="lk">编辑</span><span class="lk" style="margin-left:10px">删除</span></div>
<div class="gc" style="left:477px;width:262px;padding-left:5.500px;">2536</div>
<div class="gc" style="left:739px;width:407px;">2536</div>
<div class="gc" style="left:1146px;width:113px;"></div>
<div class="gc" style="left:1259px;width:125.5px;padding-top:1px;">1028</div>
<div class="gc" style="left:1384.5px;width:112.0px;"></div>
<div class="gc" style="left:1496.5px;width:86.5px;"></div>
</div>
<div class="gr" style="top:599.95px;background:#fcfcfc">
<div class="gc gn" style="left:0;width:50px">16</div>
<div class="gc" style="left:50px;width:125px;"></div>
<div class="gc" style="left:175px;width:75px;">手工录入</div>
<div class="gc" style="left:250px;width:53px;"></div>
<div class="gc" style="left:303px;width:50px;"><div class="cb" style="left:15px;top:10px"></div></div>
<div class="gc" style="left:353px;width:124px;"><span style="margin-left:3.500px"></span><span class="lk">编辑</span><span class="lk" style="margin-left:10px">删除</span></div>
<div class="gc" style="left:477px;width:262px;padding-left:5.500px;">2537</div>
<div class="gc" style="left:739px;width:407px;">2537</div>
<div class="gc" style="left:1146px;width:113px;"></div>
<div class="gc" style="left:1259px;width:125.5px;padding-top:1px;"></div>
<div class="gc" style="left:1384.5px;width:112.0px;"></div>
<div class="gc" style="left:1496.5px;width:86.5px;"></div>
</div>
<div class="a" style="left:1572px;top:38px;width:12px;height:567px;background:#fbfbfb"></div>
<div class="a" style="left:1573px;top:50px;width:10px;height:413px;border-radius:5px;background:#dedede"></div>
<svg class="ic" style="left:1573px;top:42px" width="10" height="6" viewBox="0 0 10 6"><path d="M0 6 L5 0 L10 6z" fill="#d8d8d8"/></svg>
<svg class="ic" style="left:1573px;top:594px" width="10" height="6" viewBox="0 0 10 6"><path d="M0 0 L5 6 L10 0z" fill="#c4c4c4"/></svg>
<div class="a" style="left:0;top:604px;width:1584px;height:16px;background:#fbfbfb;border-bottom:1px solid #cfcfcf"></div>
<div class="a" style="left:12px;top:607px;width:878px;height:11px;border-radius:5.500px;background:#e2e2e2"></div>
<svg class="ic" style="left:7px;top:607.500px" width="6" height="10" viewBox="0 0 6 10"><path d="M6 0 L0 5 L6 10z" fill="#aaa"/></svg>
<svg class="ic" style="left:1561px;top:607.500px" width="6" height="10" viewBox="0 0 6 10"><path d="M0 0 L6 5 L0 10z" fill="#aaa"/></svg>
</div>
<div class="a" style="left:293px;top:854px;width:1587px;height:37px;border:1px solid #d4d4d4;border-top:none;background:#fff"></div>
<div class="a" style="left:1391px;font-size:15px;line-height:22px;top:860.500px;color:#555;color:#777">(21条记录)</div>
<div class="a" style="left:1485px;font-size:15px;line-height:22px;top:860.500px;color:#555;color:#444">每页/条</div>
<div class="inp" style="left:1540px;top:858px;width:68px;height:27px"></div>
<div class="a" style="left:1556px;font-size:15px;line-height:22px;top:860.500px;color:#555;color:#222">20</div>
<svg class="ic" style="left:1587px;top:867.5px" width="14" height="8" viewBox="0 0 16 9"><path d="M1.200 1.200 L8 7.600 L14.800 1.200" fill="none" stroke="#555" stroke-width="1.500" stroke-linecap="round" stroke-linejoin="round"/></svg>
<svg class="ic" style="left:1637px;top:864px" width="13" height="15" viewBox="0 0 13 15"><path d="M1.500 1 V14 M11.500 1.500 L3.500 7.500 L11.500 13.500" fill="none" stroke="#b2b2b2" stroke-width="2"/></svg>
<svg class="ic" style="left:1667px;top:864px" width="12" height="15" viewBox="0 0 12 15"><path d="M10.500 1.500 L2 7.500 L10.500 13.500" fill="none" stroke="#b2b2b2" stroke-width="2"/></svg>
<div class="a" style="left:1694.500px;font-size:15px;line-height:22px;top:860.500px;color:#555;color:#444">第</div>
<div class="inp" style="left:1716px;top:858px;width:69px;height:27px"></div>
<div class="a" style="left:1736.500px;font-size:15px;line-height:22px;top:860.500px;color:#555;color:#222">1</div>
<svg class="ic" style="left:1763px;top:867.5px" width="14" height="8" viewBox="0 0 16 9"><path d="M1.200 1.200 L8 7.600 L14.800 1.200" fill="none" stroke="#555" stroke-width="1.500" stroke-linecap="round" stroke-linejoin="round"/></svg>
<div class="a" style="left:1790.500px;font-size:15px;line-height:22px;top:860.500px;color:#555;color:#444">页</div>
<svg class="ic" style="left:1821px;top:864px" width="12" height="15" viewBox="0 0 12 15"><path d="M1.500 1.500 L10 7.500 L1.500 13.500" fill="none" stroke="#444" stroke-width="1.700"/></svg>
<svg class="ic" style="left:1851px;top:864px" width="13" height="15" viewBox="0 0 13 15"><path d="M11.500 1 V14 M1.500 1.500 L9.500 7.500 L1.500 13.500" fill="none" stroke="#444" stroke-width="1.700"/></svg>
<svg class="ic" style="left:1786px;top:708px" width="80" height="62" viewBox="0 0 80 62"><defs><linearGradient id="fg" x1="0" y1="0" x2="0" y2="1"><stop offset="0" stop-color="#ffffff"/><stop offset=".55" stop-color="#fafcff"/><stop offset="1" stop-color="#b9d8f4"/></linearGradient></defs><path d="M18.500 33.500 C11.500 33.500 6.300 38.500 6.300 45.500 C6.300 53.500 17 57.300 33.500 57.300 C50 57.300 61 53.500 61 45.500 C61 38.500 56 33.800 50 33.500 C49.200 29.500 47.500 26 45.500 23.500 L21.500 23.500 C19.800 26.500 18.800 30 18.500 33.500Z" fill="url(#fg)" stroke="#46b0f6" stroke-width="2.300" stroke-linejoin="round"/><path d="M19.700 13.500 L50 13.500 L51.700 21.800 L34 25 L16.700 21.800Z" fill="#d3e6f8" opacity=".92"/><path d="M7.200 9.300 L33.300 5.300 L60.600 9.900 L34.500 17.600Z" fill="#43a9f2"/><ellipse cx="36" cy="9.800" rx="2.200" ry=".9" fill="#7aa6c8"/><path d="M36 9.800 L55.700 10.800" fill="none" stroke="#5a9fd0" stroke-width="1"/><path d="M55.700 10.500 V31" fill="none" stroke="#f4c63a" stroke-width="1.900"/><rect x="54.300" y="28" width="2.800" height="3.400" fill="#eeb52c"/><ellipse cx="24.400" cy="33.400" rx="2.500" ry="2.900" fill="#3f9fea"/><ellipse cx="42" cy="33.400" rx="2.500" ry="2.900" fill="#3f9fea"/><path d="M26.500 43.800 C30 47.800 38 47.800 41.500 43.800" fill="none" stroke="#46a8f0" stroke-width="1.700" stroke-linecap="round"/><path d="M62.600 3.600 L75.600 15.600 M75.600 3.600 L62.600 15.600" stroke="#d2d2d2" stroke-width="1.300"/></svg>
<div class="a" style="left:1788px;top:767.500px;font-size:15.200px;line-height:22px;color:#5db6ff">新手引导</div>
</div><div id="dim"></div>
<div class="a" id="dlg">
<div class="a" id="dlgt"><span style="font-size:21.300px;font-weight:500;position:relative;top:.7px">商品信息--信息框</span></div>
<svg class="ic" style="left:777px;top:18px" width="17" height="17" viewBox="0 0 17 17"><path d="M1.800 1.800 L15.200 15.200 M15.200 1.800 L1.800 15.200" stroke="#fff" stroke-width="2.800" stroke-linecap="butt"/></svg>
<div class="a" id="dpan"></div>
<div class="dtab on" style="left:6px;width:80px">基本信息</div>
<div class="dtab" style="left:91px;width:80px">扩展字段</div>
<div class="dtab" style="left:176px;width:80px">售价管理</div>
<div class="dtab" style="left:261px;width:80px">属性设置</div>
<div class="dtab" style="left:346px;width:109px">商品图片管理</div>
<div class="dtab" style="left:461px;width:65px">供应商</div>
<div class="dtab" style="left:531px;width:80px">指定仓库</div>
<div class="fl" style="left:-16.5px;top:99.0px;width:110px">选择分类</div>
<div class="fi" style="left:104px;top:99.0px;width:397px">哈伦裤</div>
<svg class="ic" style="left:478px;top:112.5px" width="16" height="5" viewBox="0 0 16 5"><g fill="#f4f4f8" stroke="#5a6080" stroke-width="1.200"><circle cx="2.500" cy="2.500" r="1.500"/><circle cx="8" cy="2.500" r="1.500"/><circle cx="13.500" cy="2.500" r="1.500"/></g></svg>
<div class="fl" style="left:-16.5px;top:139.0px;width:110px">商品名称 <span style="color:#e33">*</span></div>
<div class="fi" style="left:104px;top:139.0px;width:655px">zara 新款女装大码哈伦裤棉布工装裤56</div>
<div class="fl" style="left:-16.5px;top:179.0px;width:110px">商品编号</div>
<div class="fi" style="left:104px;top:179.0px;width:397px">W100916</div>
<div class="a" style="left:534px;top:186.5px;width:20px;height:20px;border:1px solid #d6d6d6;background:#ececec;border-radius:2px"></div>
<div class="a" style="left:560.5px;top:185.5px;font-size:15px;line-height:22px;color:#aaa">编号递增</div>
<div class="fl" style="left:-16.5px;top:219.0px;width:110px">成本算法</div>
<div class="fi dis" style="left:104px;top:219.0px;width:137px">移动加权法</div>
<svg class="ic" style="left:219px;top:232.5px" width="14" height="8" viewBox="0 0 16 9"><path d="M1.200 1.200 L8 7.600 L14.800 1.200" fill="none" stroke="#999" stroke-width="1.500" stroke-linecap="round" stroke-linejoin="round"/></svg>
<svg class="ic" style="left:259.5px;top:226.5px" width="18" height="18" viewBox="0 0 18 18"><circle cx="9" cy="9" r="7.600" fill="none" stroke="#4a4a4a" stroke-width="1.100"/><path d="M9 7.200 V13.200" stroke="#4a4a4a" stroke-width="1.300"/><circle cx="9" cy="5" r=".95" fill="#4a4a4a"/></svg>
<div class="fl" style="left:243.5px;top:219.0px;width:110px">商品类型</div>
<div class="fi dis" style="left:364px;top:219.0px;width:137px">实物商品</div>
<svg class="ic" style="left:479px;top:232.5px" width="14" height="8" viewBox="0 0 16 9"><path d="M1.200 1.200 L8 7.600 L14.800 1.200" fill="none" stroke="#999" stroke-width="1.500" stroke-linecap="round" stroke-linejoin="round"/></svg>
<svg class="ic" style="left:519.5px;top:226.5px" width="18" height="18" viewBox="0 0 18 18"><circle cx="9" cy="9" r="7.600" fill="none" stroke="#4a4a4a" stroke-width="1.100"/><path d="M9 7.200 V13.200" stroke="#4a4a4a" stroke-width="1.300"/><circle cx="9" cy="5" r=".95" fill="#4a4a4a"/></svg>
<div class="fl" style="left:-16.5px;top:259.0px;width:110px">简名</div>
<div class="fi" style="left:104px;top:259.0px;width:137px">zara哈伦裤棉布</div>
<div class="fl" style="left:243.5px;top:259.0px;width:110px">拼音码</div>
<div class="fi" style="left:364px;top:259.0px;width:137px">zaraxknzdmhlkm...</div>
<div class="fl" style="left:-16.5px;top:299.0px;width:110px">税收编码</div>
<div class="fi" style="left:104px;top:299.0px;width:137px"></div>
<div class="fl" style="left:242px;top:299.0px;width:110px">国家税率(…</div>
<div class="fi" style="left:364px;top:299.0px;width:137px">0</div>
<svg class="ic" style="left:478px;top:306.5px" width="16" height="18" viewBox="0 0 16 18"><rect x=".6" y=".6" width="14.800" height="16.300" rx="2.200" fill="#fff" stroke="#6a6a6a" stroke-width="1.200"/><path d="M1 1.300 h14 M1 4.200 h14" stroke="#7a7a7a" stroke-width="1.300"/><path d="M1.500 16.500 h13" stroke="#888" stroke-width="1"/><g fill="#e6dcc0" stroke="#43508f" stroke-width="1"><circle cx="4.100" cy="8.600" r="1.350"/><circle cx="8" cy="8.600" r="1.350"/><circle cx="11.900" cy="8.600" r="1.350"/><circle cx="4.100" cy="12.500" r="1.350"/><circle cx="8" cy="12.500" r="1.350"/><circle cx="11.900" cy="12.500" r="1.350"/></g></svg>
<svg class="ic" style="left:519.5px;top:306.5px" width="18" height="18" viewBox="0 0 18 18"><circle cx="9" cy="9" r="7.600" fill="none" stroke="#4a4a4a" stroke-width="1.100"/><path d="M9 7.200 V13.200" stroke="#4a4a4a" stroke-width="1.300"/><circle cx="9" cy="5" r=".95" fill="#4a4a4a"/></svg>
<div class="fl" style="left:503.5px;top:299.0px;width:110px">品牌</div>
<div class="fi" style="left:624px;top:299.0px;width:137px"></div>
<svg class="ic" style="left:739px;top:312.5px" width="14" height="8" viewBox="0 0 16 9"><path d="M1.200 1.200 L8 7.600 L14.800 1.200" fill="none" stroke="#555" stroke-width="1.500" stroke-linecap="round" stroke-linejoin="round"/></svg>
<svg class="ic" style="left:778px;top:306px" width="20" height="20" viewBox="0 0 24 24"><path fill="none" stroke="#444" stroke-width="1.500" stroke-linejoin="round" d="M10.300 2h3.400l.5 2.600 1.700.8 2.300-1.500 2.400 2.400-1.500 2.300.8 1.700 2.600.5v3.400l-2.600.5-.8 1.700 1.500 2.300-2.400 2.400-2.300-1.500-1.700.8-.5 2.600h-3.400l-.5-2.600-1.700-.8-2.300 1.500-2.400-2.400 1.500-2.300-.8-1.700-2.600-.5v-3.400l2.600-.5.8-1.700-1.500-2.300 2.400-2.400 2.300 1.500 1.700-.8z"/><circle cx="12" cy="12.500" r="3.600" fill="none" stroke="#444" stroke-width="1.500"/></svg>
<div class="fl" style="left:-16.5px;top:339.0px;width:110px">产地</div>
<div class="fi" style="left:104px;top:339.0px;width:137px">成都</div>
<div class="fl" style="left:243.5px;top:339.0px;width:110px">难度系数</div>
<div class="fi" style="left:364px;top:339.0px;width:137px">0</div>
<svg class="ic" style="left:478px;top:346.5px" width="16" height="18" viewBox="0 0 16 18"><rect x=".6" y=".6" width="14.800" height="16.300" rx="2.200" fill="#fff" stroke="#6a6a6a" stroke-width="1.200"/><path d="M1 1.300 h14 M1 4.200 h14" stroke="#7a7a7a" stroke-width="1.300"/><path d="M1.500 16.500 h13" stroke="#888" stroke-width="1"/><g fill="#e6dcc0" stroke="#43508f" stroke-width="1"><circle cx="4.100" cy="8.600" r="1.350"/><circle cx="8" cy="8.600" r="1.350"/><circle cx="11.900" cy="8.600" r="1.350"/><circle cx="4.100" cy="12.500" r="1.350"/><circle cx="8" cy="12.500" r="1.350"/><circle cx="11.900" cy="12.500" r="1.350"/></g></svg>
<svg class="ic" style="left:519.5px;top:346.5px" width="18" height="18" viewBox="0 0 18 18"><circle cx="9" cy="9" r="7.600" fill="none" stroke="#4a4a4a" stroke-width="1.100"/><path d="M9 7.200 V13.200" stroke="#4a4a4a" stroke-width="1.300"/><circle cx="9" cy="5" r=".95" fill="#4a4a4a"/></svg>
<div class="fl" style="left:503.5px;top:339.0px;width:110px">规格</div>
<div class="fi" style="left:624px;top:339.0px;width:137px"></div>
<div class="fl" style="left:-16.5px;top:379.0px;width:110px">型号</div>
<div class="fi" style="left:104px;top:379.0px;width:137px"></div>
<div class="fl" style="left:243.5px;top:379.0px;width:110px">重量(kg)</div>
<div class="fi" style="left:364px;top:379.0px;width:137px">1.26</div>
<svg class="ic" style="left:478px;top:386.5px" width="16" height="18" viewBox="0 0 16 18"><rect x=".6" y=".6" width="14.800" height="16.300" rx="2.200" fill="#fff" stroke="#6a6a6a" stroke-width="1.200"/><path d="M1 1.300 h14 M1 4.200 h14" stroke="#7a7a7a" stroke-width="1.300"/><path d="M1.500 16.500 h13" stroke="#888" stroke-width="1"/><g fill="#e6dcc0" stroke="#43508f" stroke-width="1"><circle cx="4.100" cy="8.600" r="1.350"/><circle cx="8" cy="8.600" r="1.350"/><circle cx="11.900" cy="8.600" r="1.350"/><circle cx="4.100" cy="12.500" r="1.350"/><circle cx="8" cy="12.500" r="1.350"/><circle cx="11.900" cy="12.500" r="1.350"/></g></svg>
<div class="fl" style="left:-16.5px;top:419.0px;width:110px">长度</div>
<div class="fi" style="left:104px;top:419.0px;width:137px">0</div>
<svg class="ic" style="left:218px;top:426.5px" width="16" height="18" viewBox="0 0 16 18"><rect x=".6" y=".6" width="14.800" height="16.300" rx="2.200" fill="#fff" stroke="#6a6a6a" stroke-width="1.200"/><path d="M1 1.300 h14 M1 4.200 h14" stroke="#7a7a7a" stroke-width="1.300"/><path d="M1.500 16.500 h13" stroke="#888" stroke-width="1"/><g fill="#e6dcc0" stroke="#43508f" stroke-width="1"><circle cx="4.100" cy="8.600" r="1.350"/><circle cx="8" cy="8.600" r="1.350"/><circle cx="11.900" cy="8.600" r="1.350"/><circle cx="4.100" cy="12.500" r="1.350"/><circle cx="8" cy="12.500" r="1.350"/><circle cx="11.900" cy="12.500" r="1.350"/></g></svg>
<div class="fl" style="left:243.5px;top:419.0px;width:110px">宽度</div>
<div class="fi" style="left:364px;top:419.0px;width:137px">0</div>
<svg class="ic" style="left:478px;top:426.5px" width="16" height="18" viewBox="0 0 16 18"><rect x=".6" y=".6" width="14.800" height="16.300" rx="2.200" fill="#fff" stroke="#6a6a6a" stroke-width="1.200"/><path d="M1 1.300 h14 M1 4.200 h14" stroke="#7a7a7a" stroke-width="1.300"/><path d="M1.500 16.500 h13" stroke="#888" stroke-width="1"/><g fill="#e6dcc0" stroke="#43508f" stroke-width="1"><circle cx="4.100" cy="8.600" r="1.350"/><circle cx="8" cy="8.600" r="1.350"/><circle cx="11.900" cy="8.600" r="1.350"/><circle cx="4.100" cy="12.500" r="1.350"/><circle cx="8" cy="12.500" r="1.350"/><circle cx="11.900" cy="12.500" r="1.350"/></g></svg>
<div class="fl" style="left:503.5px;top:419.0px;width:110px">高度</div>
<div class="fi" style="left:624px;top:419.0px;width:137px">0</div>
<svg class="ic" style="left:738px;top:426.5px" width="16" height="18" viewBox="0 0 16 18"><rect x=".6" y=".6" width="14.800" height="16.300" rx="2.200" fill="#fff" stroke="#6a6a6a" stroke-width="1.200"/><path d="M1 1.300 h14 M1 4.200 h14" stroke="#7a7a7a" stroke-width="1.300"/><path d="M1.500 16.500 h13" stroke="#888" stroke-width="1"/><g fill="#e6dcc0" stroke="#43508f" stroke-width="1"><circle cx="4.100" cy="8.600" r="1.350"/><circle cx="8" cy="8.600" r="1.350"/><circle cx="11.900" cy="8.600" r="1.350"/><circle cx="4.100" cy="12.500" r="1.350"/><circle cx="8" cy="12.500" r="1.350"/><circle cx="11.900" cy="12.500" r="1.350"/></g></svg>
<div class="fl" style="left:-16.5px;top:459.0px;width:110px">条码格式</div>
<div class="fi" style="left:104px;top:459.0px;width:137px"><span style="display:inline-block;width:106px;overflow:hidden;vertical-align:top">手工录入完整条码</span></div>
<svg class="ic" style="left:218px;top:472.5px" width="16" height="5" viewBox="0 0 16 5"><g fill="#f4f4f8" stroke="#5a6080" stroke-width="1.200"><circle cx="2.500" cy="2.500" r="1.500"/><circle cx="8" cy="2.500" r="1.500"/><circle cx="13.500" cy="2.500" r="1.500"/></g></svg>
<svg class="ic" style="left:259.5px;top:466.5px" width="18" height="18" viewBox="0 0 18 18"><circle cx="9" cy="9" r="7.600" fill="none" stroke="#4a4a4a" stroke-width="1.100"/><path d="M9 7.200 V13.200" stroke="#4a4a4a" stroke-width="1.300"/><circle cx="9" cy="5" r=".95" fill="#4a4a4a"/></svg>
<div class="fl" style="left:243.5px;top:459.0px;width:110px">商品码</div>
<div class="fi" style="left:364px;top:459.0px;width:137px"></div>
<svg class="ic" style="left:519.5px;top:466.5px" width="18" height="18" viewBox="0 0 18 18"><circle cx="9" cy="9" r="7.600" fill="none" stroke="#4a4a4a" stroke-width="1.100"/><path d="M9 7.200 V13.200" stroke="#4a4a4a" stroke-width="1.300"/><circle cx="9" cy="5" r=".95" fill="#4a4a4a"/></svg>
<div class="fl" style="left:-16.5px;top:499.0px;width:110px">供货产地</div>
<div class="fi" style="left:104px;top:499.0px;width:397px"></div>
<div class="fl" style="left:496.5px;top:499.0px;width:110px">参考成本...</div>
<div class="fi" style="left:624px;top:499.0px;width:137px">130</div>
<svg class="ic" style="left:738px;top:506.5px" width="16" height="18" viewBox="0 0 16 18"><rect x=".6" y=".6" width="14.800" height="16.300" rx="2.200" fill="#fff" stroke="#6a6a6a" stroke-width="1.200"/><path d="M1 1.300 h14 M1 4.200 h14" stroke="#7a7a7a" stroke-width="1.300"/><path d="M1.500 16.500 h13" stroke="#888" stroke-width="1"/><g fill="#e6dcc0" stroke="#43508f" stroke-width="1"><circle cx="4.100" cy="8.600" r="1.350"/><circle cx="8" cy="8.600" r="1.350"/><circle cx="11.900" cy="8.600" r="1.350"/><circle cx="4.100" cy="12.500" r="1.350"/><circle cx="8" cy="12.500" r="1.350"/><circle cx="11.900" cy="12.500" r="1.350"/></g></svg>
<svg class="ic" style="left:779.5px;top:506.5px" width="18" height="18" viewBox="0 0 18 18"><circle cx="9" cy="9" r="7.600" fill="none" stroke="#4a4a4a" stroke-width="1.100"/><path d="M9 7.200 V13.200" stroke="#4a4a4a" stroke-width="1.300"/><circle cx="9" cy="5" r=".95" fill="#4a4a4a"/></svg>
<div class="fl" style="left:-16.5px;top:539.0px;width:110px">是否计重</div>
<div class="fi" style="left:104px;top:539.0px;width:137px">不计重</div>
<svg class="ic" style="left:219px;top:552.5px" width="14" height="8" viewBox="0 0 16 9"><path d="M1.200 1.200 L8 7.600 L14.800 1.200" fill="none" stroke="#555" stroke-width="1.500" stroke-linecap="round" stroke-linejoin="round"/></svg>
<svg class="ic" style="left:259.5px;top:546.5px" width="18" height="18" viewBox="0 0 18 18"><circle cx="9" cy="9" r="7.600" fill="none" stroke="#4a4a4a" stroke-width="1.100"/><path d="M9 7.200 V13.200" stroke="#4a4a4a" stroke-width="1.300"/><circle cx="9" cy="5" r=".95" fill="#4a4a4a"/></svg>
<div class="fl" style="left:-16.5px;top:579.0px;width:110px">商品备注</div>
<div class="fi" style="left:104px;top:579.0px;width:655px">无</div>
<div class="btn" style="left:610px;top:638px;width:117px;border-color:#e4e4e4;background:#f7f7f7">保存并关闭(<u>K</u>)</div>
<div class="btn" style="left:733px;top:638px;width:73px;border-color:#e4e4e4;background:#f7f7f7">关闭(<u>X</u>)</div>
</div>
<div class="rb" style="left:74px;top:45px;width:64px;height:42px"></div>
<div class="rc" style="left:140.500px;top:46.500px">1</div>
<div class="rb" style="left:88px;top:100px;width:126px;height:38.500px"></div>
<div class="rc" style="left:215px;top:111.500px">2</div>
<div class="rb" style="left:649px;top:271px;width:47px;height:34px"></div>
<div class="rc" style="left:613px;top:270px">3</div>
<div class="rb" style="left:918px;top:252.700px;width:324px;height:46px"></div>
<div class="rc" style="left:1240px;top:263.500px">4</div>
</body></html>
